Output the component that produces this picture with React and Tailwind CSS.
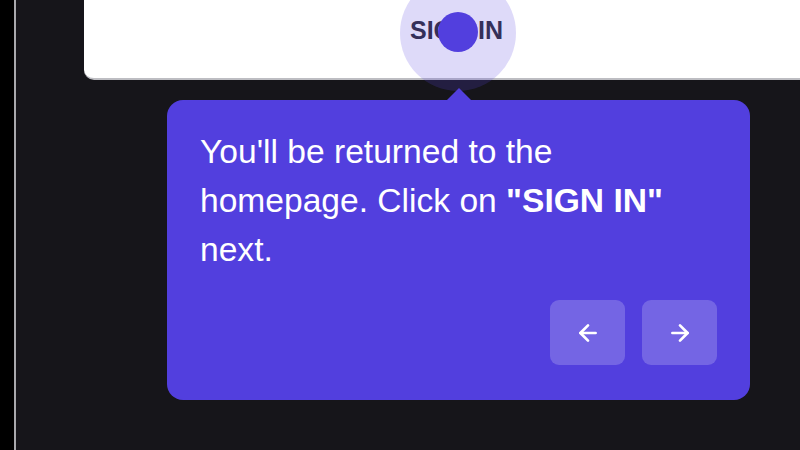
import React from 'react'
import { ArrowLeft, ArrowRight } from 'lucide-react'

const App = () => {
  return (
    <div className="flex w-[800px] h-[450px] overflow-hidden bg-black" style={{ fontFamily: '"Liberation Sans", Arial, sans-serif' }}>
      <div className="w-[14px] bg-black" />
      <div className="w-[2px] bg-[#a9a9ad]" />
      <div className="relative flex-1 bg-[#16151a]">
        {/* highlighted page strip */}
        <div className="ml-[68px] h-[80px] bg-white rounded-bl-[10px] border-b-2 border-[#bdbdc2] pl-[326px] pt-[18px]">
          <span className="block text-[25px] leading-none font-bold text-[#2b2a38]">SIGN IN</span>
        </div>

        {/* spotlight */}
        <div className="absolute left-[384px] top-[-25px] w-[116px] h-[116px] rounded-full bg-[#5a47e0]/20" />
        <div className="absolute left-[422px] top-[12px] w-[40px] h-[40px] rounded-full bg-[#523fde]" />

        {/* tooltip */}
        <div className="relative mt-[20px] ml-[151px] w-[583px] h-[300px] rounded-[16px] bg-[#523fde] px-[33px] pt-[27px] pb-[35px] flex flex-col">
          <div className="absolute left-[280px] top-[-12px] w-0 h-0 border-l-[12px] border-r-[12px] border-b-[12px] border-l-transparent border-r-transparent border-b-[#523fde]" />
          <p className="text-white text-[33.6px] leading-[49px] font-normal">
            You'll be returned to the homepage. Click on <span className="font-bold">"SIGN IN"</span> next.
          </p>
          <div className="mt-auto flex justify-end gap-[17px]">
            <button className="w-[75px] h-[65px] rounded-[9px] bg-white/20 flex items-center justify-center text-white">
              <ArrowLeft size={26} strokeWidth={2.5} />
            </button>
            <button className="w-[75px] h-[65px] rounded-[9px] bg-white/20 flex items-center justify-center text-white">
              <ArrowRight size={26} strokeWidth={2.5} />
            </button>
          </div>
        </div>
      </div>
    </div>
  )
}

export default App
